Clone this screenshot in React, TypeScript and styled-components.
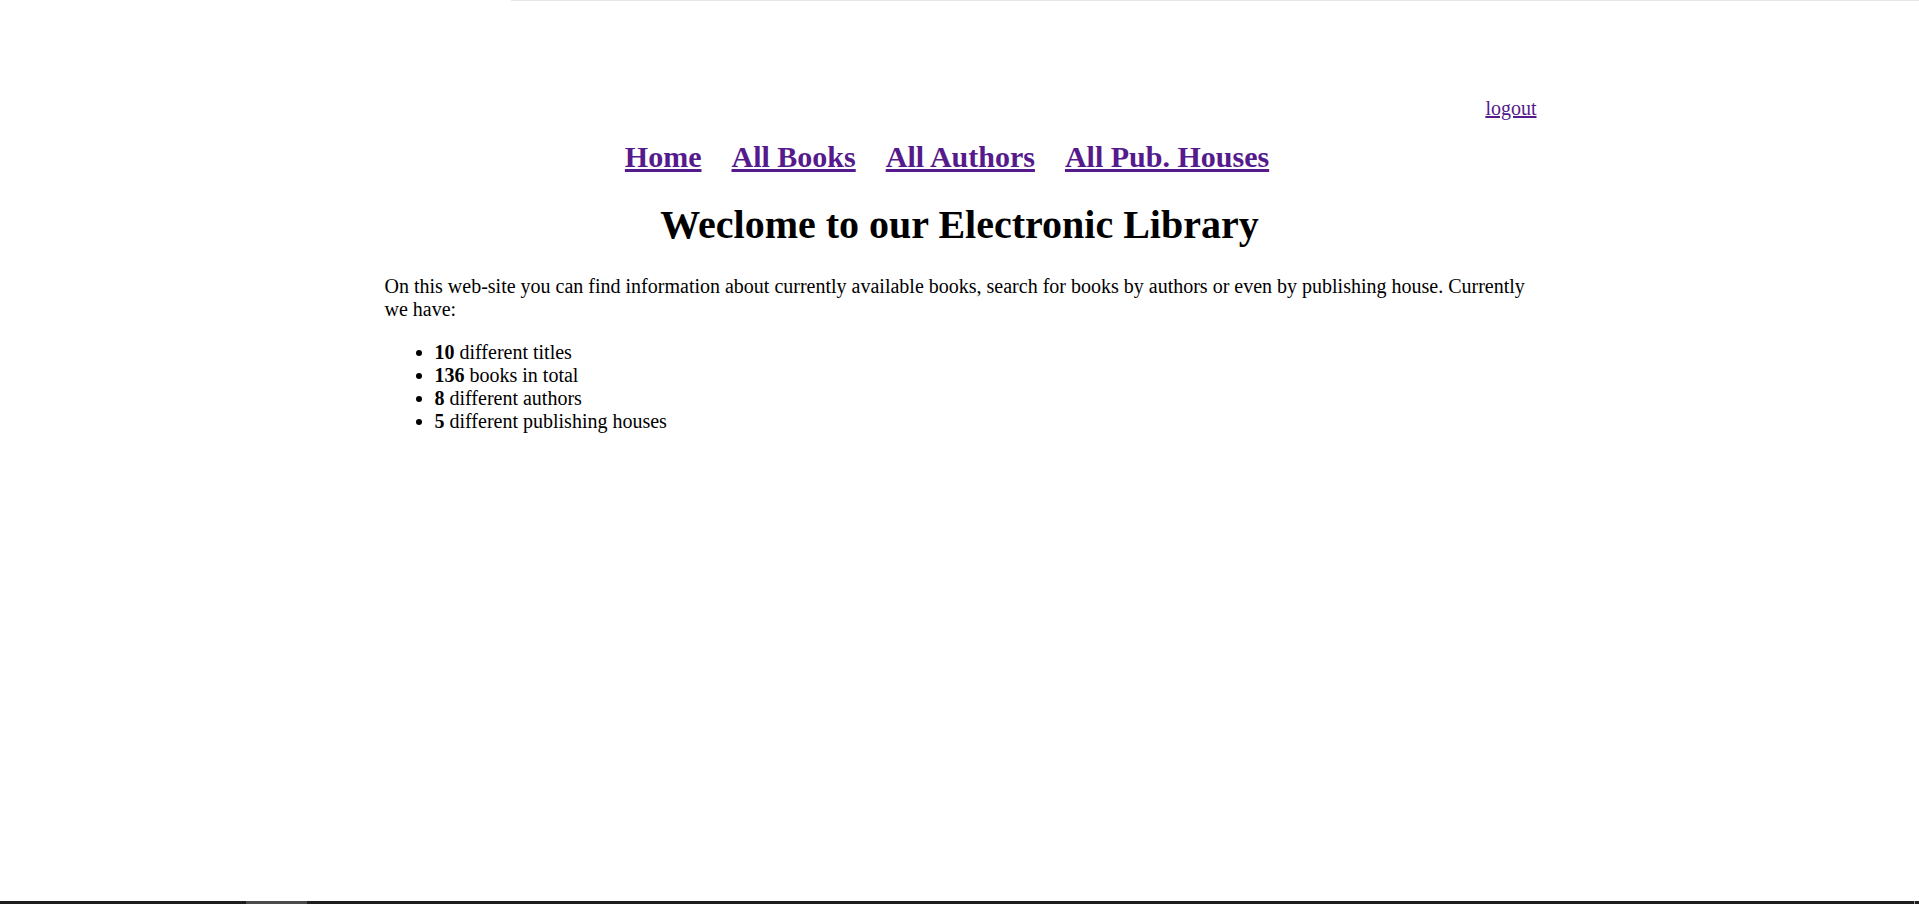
import React from "react";
import styled, { createGlobalStyle } from "styled-components";

const Global = createGlobalStyle`
  html, body { margin: 0; padding: 0; background: #ffffff; }
  body {
    font-family: "Liberation Serif", "Times New Roman", serif;
    font-size: 20px;
    color: #000;
  }
`;

const TopEdge = styled.div`
  position: fixed;
  top: 0;
  left: 511px;
  right: 0;
  height: 1px;
  background: #e6e6e6;
`;

const BottomBar = styled.div`
  position: fixed;
  left: 0;
  right: 0;
  bottom: 0;
  height: 3px;
  background: #1e1e1e;
  display: flex;
`;

const BarThumb = styled.div<{ $left: number; $width: number; $color: string }>`
  margin-left: ${(p) => p.$left}px;
  width: ${(p) => p.$width}px;
  height: 100%;
  background: ${(p) => p.$color};
`;

const Page = styled.div`
  width: 1150px;
  margin: 0 auto;
  padding-top: 97px;
`;

const LogoutRow = styled.div`
  text-align: right;
  line-height: 23px;
  margin-right: -2px;
`;

const Link = styled.a`
  color: #551a8b;
  text-decoration: underline;
  cursor: pointer;
`;

const Nav = styled.nav`
  display: flex;
  justify-content: center;
  gap: 30px;
  padding-right: 25px;
  margin-top: 19px;
  font-size: 30px;
  font-weight: bold;
  line-height: 35px;
`;

const Title = styled.h1`
  margin: 28px 0 27px;
  text-align: center;
  font-size: 40px;
  line-height: 46px;
  font-weight: bold;
`;

const Intro = styled.p`
  margin: 0 0 20px;
  line-height: 23px;
`;

const Stats = styled.ul`
  margin: 0;
  padding-left: 50px;
  line-height: 23px;
`;

const stats = [
  { n: "10", t: "different titles" },
  { n: "136", t: "books in total" },
  { n: "8", t: "different authors" },
  { n: "5", t: "different publishing houses" },
];

export default function App() {
  return (
    <>
      <Global />
      <TopEdge />
      <Page>
        <LogoutRow>
          <Link>logout</Link>
        </LogoutRow>
        <Nav>
          <Link>Home</Link>
          <Link>All Books</Link>
          <Link>All Authors</Link>
          <Link>All Pub. Houses</Link>
        </Nav>
        <Title>Weclome to our Electronic Library</Title>
        <Intro>
          On this web-site you can find information about currently available books, search for books
          by authors or even by publishing house. Currently we have:
        </Intro>
        <Stats>
          {stats.map((s) => (
            <li key={s.n}>
              <b>{s.n}</b> {s.t}
            </li>
          ))}
        </Stats>
      </Page>
      <BottomBar>
        <BarThumb $left={246} $width={61} $color="#4a4a4a" />
        <BarThumb $left={1607} $width={1} $color="#9a9a9a" />
      </BottomBar>
    </>
  );
}
